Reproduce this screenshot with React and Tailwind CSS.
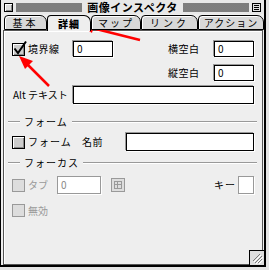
import React from 'react';

const font = { fontFamily: '"Noto Sans CJK JP", "Liberation Sans", sans-serif' };

const Dots = () => (
  <div className="flex-1 h-[9px] bg-[radial-gradient(circle,#7a7a7a_0.7px,transparent_0.9px)] bg-[length:2px_2px]" />
);

const Checkbox = ({ checked, disabled }) => (
  <div className="relative w-[13px] h-[13px] shrink-0">
    <div
      className={
        disabled
          ? 'w-full h-full border border-[#999] bg-[#ddd]'
          : 'w-full h-full border border-black bg-[#ccc] shadow-[inset_1px_1px_0_#fff,inset_-1px_-1px_0_#888]'
      }
    />
    {checked && (
      <svg className="absolute -top-[3px] left-0" width="16" height="16" viewBox="0 0 16 16">
        <path d="M2.5 8.5 L6 13 L14 1.5" stroke="#000" strokeWidth="2" fill="none" />
      </svg>
    )}
  </div>
);

const Input = ({ value, className, disabled }) => (
  <div
    className={
      (disabled
        ? 'border border-[#999] bg-white shadow-[1px_1px_0_#fff] '
        : 'border border-black bg-white shadow-[-1px_-1px_0_#999,1px_1px_0_#fff] ') +
      'flex items-center pl-[3px] text-[10px] leading-none ' +
      (disabled ? 'text-[#888] ' : 'text-black ') +
      className
    }
  >
    {value}
  </div>
);

const Separator = ({ label }) => (
  <div className="flex items-center -ml-[4px] -mr-[3px] h-[12px]">
    <div className="w-[12px] h-[2px] border-t border-[#999] border-b border-b-white" />
    <span className="px-[4px] text-[10px] leading-[12px] tracking-[1px]">{label}</span>
    <div className="flex-1 h-[2px] border-t border-[#999] border-b border-b-white" />
  </div>
);

const tabs = [
  { label: '基本', w: 'w-[43px]', t: 'tracking-[3px]' },
  { label: '詳細', w: 'w-[44px]', t: 'tracking-[1px]', active: true },
  { label: 'マップ', w: 'w-[50px]', t: 'tracking-[2px]' },
  { label: 'リンク', w: 'w-[57px]', t: 'tracking-[3px]' },
  { label: 'アクション', w: 'w-[66px]', t: 'tracking-[1px]' },
];

export default function App() {
  return (
    <div className="w-[269px] h-[270px] bg-[#e4e4e4] text-black relative" style={font}>
      <div className="w-[266px] h-[267px] bg-[#eee] border-l border-black border-r-2 border-b-2 flex flex-col relative">
        {/* title bar */}
        <div className="h-[14px] flex items-center pl-[3px] pr-[3px] gap-[3px] bg-[#e8e8e8]">
          <div className="w-[9px] h-[9px] border border-black bg-[#ddd] shadow-[inset_1px_1px_0_#fff,inset_-1px_-1px_0_#888]" />
          <Dots />
          <span className="px-[2px] text-[11px] font-bold leading-[14px] whitespace-nowrap tracking-[0.5px]">画像インスペクタ</span>
          <Dots />
          <div className="w-[9px] h-[9px] border border-black bg-[#ddd] flex flex-col justify-center gap-[1px] px-[1px]">
            <div className="h-px bg-black" />
            <div className="h-px bg-black" />
            <div className="h-px bg-black" />
          </div>
        </div>

        {/* tabs */}
        <div className="h-[16px] flex items-end pl-[3px] relative z-10">
          {tabs.map((t) => (
            <div
              key={t.label}
              className={
                t.w + ' ' + t.t +
                ' flex items-center justify-center text-[10px] leading-none border border-black rounded-tl-[4px] rounded-tr-[7px] ' +
                (t.active
                  ? 'h-[16px] -mb-px border-b-0 bg-[#eee] font-black'
                  : 'h-[15px] bg-[#d8d8d8] shadow-[inset_1px_1px_0_#fff]')
              }
            >
              {t.label}
            </div>
          ))}
        </div>

        {/* panel */}
        <div className="ml-[2px] mr-[1px] flex-1 border border-[#555] shadow-[inset_1px_1px_0_#fff] bg-[#eee] pl-[8px] pr-[8px] text-[10px] leading-none">
          <div className="flex items-center mt-[10px] h-[16px]">
            <Checkbox checked />
            <span className="ml-[3px] w-[45px] tracking-[0.5px]">境界線</span>
            <Input value="0" className="w-[40px] h-[16px]" />
            <span className="ml-[55px] w-[46px] tracking-[0.5px]">横空白</span>
            <Input value="0" className="w-[40px] h-[16px]" />
          </div>
          <div className="flex items-center justify-end mt-[8px] h-[16px]">
            <span className="w-[46px] tracking-[0.5px]">縦空白</span>
            <Input value="0" className="w-[40px] h-[16px]" />
          </div>
          <div className="flex items-center mt-[5px] h-[18px]">
            <span className="ml-[1px] w-[60px]">Alt テキスト</span>
            <Input value="" className="flex-1 h-[18px]" />
          </div>

          <div className="mt-[12px]">
            <Separator label="フォーム" />
          </div>

          <div className="flex items-center mt-[5px] h-[18px]">
            <Checkbox />
            <span className="ml-[3px] w-[54px] tracking-[1px]">フォーム</span>
            <span className="w-[44px] tracking-[0.5px]">名前</span>
            <Input value="" className="flex-1 h-[18px]" />
          </div>

          <div className="mt-[6px]">
            <Separator label="フォーカス" />
          </div>

          <div className="flex items-center mt-[7px] h-[18px]">
            <Checkbox disabled />
            <span className="ml-[3px] w-[29px] text-[#999]">タブ</span>
            <Input value="0" disabled className="w-[44px] h-[18px]" />
            <div className="ml-[10px] w-[14px] h-[14px] border border-[#999] bg-[#ddd] flex items-center justify-center">
              <div className="w-[8px] h-[8px] border border-[#999] grid grid-cols-2 grid-rows-2">
                <div className="border-r border-b border-[#999]" />
                <div className="border-b border-[#999]" />
                <div className="border-r border-[#999]" />
                <div />
              </div>
            </div>
            <div className="flex-1" />
            <span className="w-[24px] tracking-[1px]">キー</span>
            <Input value="" disabled className="w-[16px] h-[18px]" />
          </div>

          <div className="flex items-center mt-[10px] h-[13px]">
            <Checkbox disabled />
            <span className="ml-[3px] text-[#999]">無効</span>
          </div>
        </div>

        {/* resize box */}
        <div className="absolute right-0 bottom-0 w-[15px] h-[15px] border-l border-t border-black bg-[#ddd] flex items-center justify-center">
          <svg width="11" height="11" viewBox="0 0 11 11">
            <path d="M1 8 L8 1 M3 10 L10 3 M6 10 L10 6" stroke="#777" strokeWidth="1" fill="none" />
            <path d="M2 9 L9 2 M4 11 L11 4 M7 11 L11 7" stroke="#fff" strokeWidth="1" fill="none" />
          </svg>
        </div>
      </div>

      {/* annotation arrows */}
      <svg className="absolute inset-0 pointer-events-none" width="269" height="270" viewBox="0 0 269 270">
        <line x1="140" y1="40" x2="92" y2="28" stroke="#f00" strokeWidth="2.5" />
        <polygon points="80,25 95,22 92,33" fill="#f00" />
        <line x1="49" y1="86" x2="27" y2="64" stroke="#f00" strokeWidth="2.5" />
        <polygon points="19,56 33,61 25,69" fill="#f00" />
      </svg>
    </div>
  );
}
